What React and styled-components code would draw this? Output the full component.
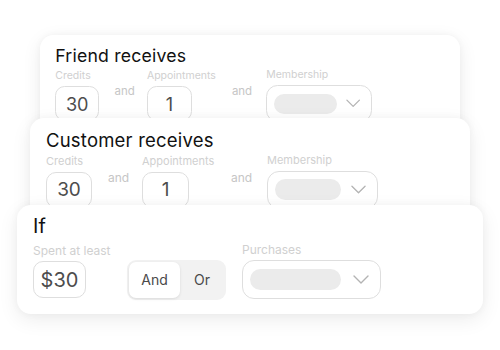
import React from "react";
import styled, { createGlobalStyle } from "styled-components";

const Global = createGlobalStyle`
  html, body { margin: 0; padding: 0; background: #ffffff; }
  body { font-family: Inter, "Noto Sans", sans-serif; }
  * { box-sizing: border-box; }
`;

const Stack = styled.div`
  display: flex;
  flex-direction: column;
  align-items: flex-start;
  padding-top: 35px;
  width: 500px;
  height: 350px;
  overflow: hidden;
`;

const Card = styled.div`
  position: relative;
  z-index: ${(p) => p.$layer};
  zoom: ${(p) => p.$zoom || 1};
  width: ${(p) => p.$width}px;
  height: ${(p) => p.$height}px;
  margin-left: ${(p) => p.$left}px;
  margin-top: ${(p) => p.$top || 0}px;
  background: #ffffff;
  border-radius: 14px;
  box-shadow: 0 6px 20px rgba(0, 0, 0, 0.075), 0 0 8px rgba(0, 0, 0, 0.04);
  padding: ${(p) => p.$padTop}px 16px 0 16px;
  overflow: hidden;
`;

const Title = styled.div`
  font-size: ${(p) => p.$size}px;
  line-height: ${(p) => p.$lh}px;
  color: #111111;
  font-weight: 400;
  letter-spacing: 0.2px;
`;

const ReceiveGrid = styled.div`
  display: grid;
  grid-template-columns: 46px 18px 73px 20px 111px;
  grid-template-rows: 14px auto;
  column-gap: 16px;
  row-gap: 4px;
  margin-top: 3px;
  align-items: start;
`;

const Label = styled.div`
  font-size: ${(p) => p.$size || 11}px;
  line-height: ${(p) => (p.$size || 11) + 3}px;
  color: #d0d0d0;
  white-space: nowrap;
  grid-column: ${(p) => p.$col || "auto"};
  margin-top: ${(p) => p.$shift || 0}px;
`;

const And = styled.div`
  font-size: 12px;
  line-height: 12px;
  color: #c6c6c6;
`;

const ValueBox = styled.div`
  width: ${(p) => p.$w}px;
  height: ${(p) => p.$h}px;
  border: 1px solid #dedede;
  border-radius: 10px;
  display: flex;
  align-items: center;
  justify-content: center;
  font-size: ${(p) => p.$fs}px;
  color: #4d4d4d;
  grid-column: ${(p) => p.$col || "auto"};
`;

const Select = styled.div`
  width: ${(p) => p.$w}px;
  height: ${(p) => p.$h}px;
  border: 1px solid #dedede;
  border-radius: 12px;
  display: flex;
  align-items: center;
  justify-content: space-between;
  padding: 0 11px 0 7px;
  grid-column: ${(p) => p.$col || "auto"};
  margin-top: ${(p) => p.$shift || 0}px;
`;

const Pill = styled.div`
  width: ${(p) => p.$w}px;
  height: ${(p) => p.$h}px;
  border-radius: 11px;
  background: #ebebeb;
`;

const Chevron = ({ w }) => (
  <svg width={w} height="9" viewBox="0 0 16 9" fill="none">
    <polyline points="1,1 8,8 15,1" stroke="#b3b3b3" strokeWidth="1.4" strokeLinecap="round" strokeLinejoin="round" />
  </svg>
);

const IfRow = styled.div`
  display: grid;
  grid-template-columns: 53px 41px 99px 16px 139px;
  grid-template-rows: 15px 40px;
  row-gap: 2px;
  margin-top: 4.5px;
  align-items: center;
`;

const Segmented = styled.div`
  grid-column: 3;
  height: 40px;
  width: 99px;
  background: #f2f2f2;
  border-radius: 9px;
  padding: 2px;
  display: flex;
  align-items: stretch;
`;

const Seg = styled.div`
  width: ${(p) => p.$w}px;
  border-radius: 7px;
  background: ${(p) => (p.$active ? "#ffffff" : "transparent")};
  box-shadow: ${(p) => (p.$active ? "0 1px 3px rgba(0,0,0,0.1)" : "none")};
  display: flex;
  align-items: center;
  justify-content: center;
  font-size: 14px;
  color: #4a4a4a;
`;

function ReceiveCard({ title, layer, zoom, left, top }) {
  return (
    <Card $layer={layer} $zoom={zoom} $left={left} $top={top} $width={440} $height={104} $padTop={10.8}>
      <Title $size={18.5} $lh={22}>{title}</Title>
      <ReceiveGrid>
        <Label $col={1}>Credits</Label>
        <Label $col={3}>Appointments</Label>
        <Label $col={5} $shift={-1}>Membership</Label>
        <ValueBox $w={46} $h={36} $fs={19} $col={1}>30</ValueBox>
        <And>and</And>
        <ValueBox $w={47} $h={36} $fs={19} $col={3}>1</ValueBox>
        <And>and</And>
        <Select $w={111} $h={38} $col={5} $shift={-1}>
          <Pill $w={66} $h={21} />
          <Chevron w={15} />
        </Select>
      </ReceiveGrid>
    </Card>
  );
}

export default function App() {
  return (
    <>
      <Global />
      <Stack>
        <ReceiveCard title="Friend receives" layer={1} zoom={0.955} left={41.9} top={0} />
        <ReceiveCard title="Customer receives" layer={2} left={30} top={-16.3} />
        <Card $layer={3} $left={17} $top={-17} $width={466} $height={109} $padTop={9.3}>
          <Title $size={20} $lh={24}>If</Title>
          <IfRow>
            <Label $size={12} $col={"1 / 3"}>Spent at least</Label>
            <Label $size={12} $col={5} $shift={-2}>Purchases</Label>
            <ValueBox $w={53} $h={37} $fs={20} $col={1}>$30</ValueBox>
            <Segmented>
              <Seg $w={51} $active>And</Seg>
              <Seg $w={44}>Or</Seg>
            </Segmented>
            <Select $w={139} $h={39} $col={5}>
              <Pill $w={91} $h={21} />
              <Chevron w={16} />
            </Select>
          </IfRow>
        </Card>
      </Stack>
    </>
  );
}
